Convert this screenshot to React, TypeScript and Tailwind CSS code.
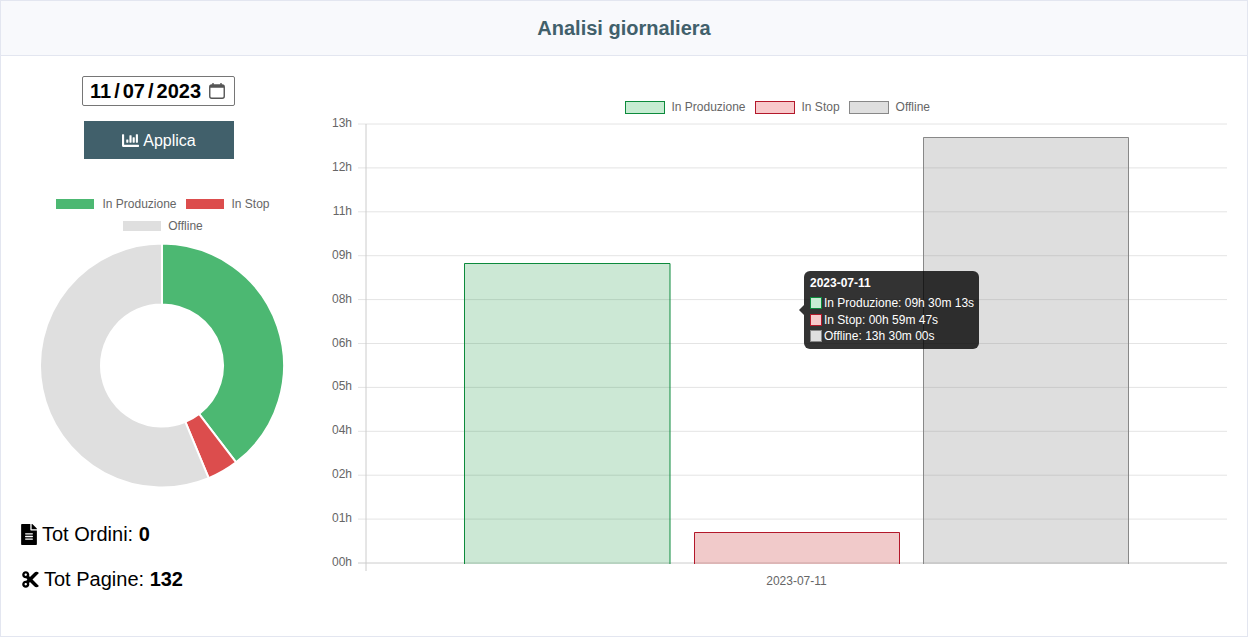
import React from 'react';
import { FaChartBar, FaCut, FaFileAlt } from 'react-icons/fa';

const ticks = ['13h', '12h', '11h', '09h', '08h', '06h', '05h', '04h', '02h', '01h', '00h'];

const polar = (r: number, deg: number) => {
  const a = (deg * Math.PI) / 180;
  return [143 + r * Math.sin(a), 127.5 + r * Math.cos(a) * -1];
};

const slice = (from: number, to: number) => {
  const [x1, y1] = polar(122, from);
  const [x2, y2] = polar(122, to);
  const [x3, y3] = polar(61, to);
  const [x4, y4] = polar(61, from);
  const large = to - from > 180 ? 1 : 0;
  return `M${x1} ${y1}A122 122 0 ${large} 1 ${x2} ${y2}L${x3} ${y3}A61 61 0 ${large} 0 ${x4} ${y4}Z`;
};

const Doughnut: React.FC = () => (
  <svg width="286" height="254" viewBox="0 0 286 254" className="block">
    <path d={slice(0, 142.6)} fill="#4cb872" stroke="#fff" strokeWidth="2" />
    <path d={slice(142.6, 157.5)} fill="#dc4d4d" stroke="#fff" strokeWidth="2" />
    <path d={slice(157.5, 360)} fill="#dfdfdf" stroke="#fff" strokeWidth="2" />
  </svg>
);

const BarChart: React.FC = () => (
  <svg width="924" height="485" viewBox="323 115 924 485" className="block" fontFamily='"Liberation Sans", Arial, sans-serif'>
    {ticks.map((t, i) => {
      const y = 124 + i * 43.9;
      return (
        <g key={t}>
          <line x1="358" x2="1227" y1={y} y2={y} stroke={i === 10 ? '#cccccc' : '#e4e4e4'} />
          <text x="352" y={y + 3} textAnchor="end" fontSize="12" fill="#666">{t}</text>
        </g>
      );
    })}
    <line x1="366" x2="366" y1="124" y2="571" stroke="#cccccc" />
    <rect x="464" y="263" width="206" height="301" fill="#008a2e" fillOpacity="0.2" />
    <path d="M464.5 564V263.5H670V564" fill="none" stroke="#0c8a3c" />
    <rect x="694" y="532" width="206" height="32" fill="#c92a2a" fillOpacity="0.25" />
    <path d="M694.5 564V532.5H899.5V564" fill="none" stroke="#b3182a" />
    <rect x="923" y="137" width="206" height="427" fill="#8a8a8a" fillOpacity="0.28" />
    <path d="M923.5 564V137.5H1128.5V564" fill="none" stroke="#888" />
    <text x="796.5" y="585" textAnchor="middle" fontSize="12" fill="#666">2023-07-11</text>
  </svg>
);

const LegendItem: React.FC<{ box: string; label: string; gap: string; text?: string }> = ({ box, label, gap, text }) => (
  <div className={`flex items-center ${gap}`}>
    <span className={`block ${box}`}></span>
    <span className={`text-[12px] leading-[14px] text-[#666] ${text ?? ''}`}>{label}</span>
  </div>
);

const TooltipRow: React.FC<{ box: string; label: string }> = ({ box, label }) => (
  <div className="flex items-center h-[16.5px] gap-[2px] whitespace-nowrap">
    <span className={`block shrink-0 w-[12px] h-[12px] border ${box}`}></span>
    <span>{label}</span>
  </div>
);

export default function App() {
  return (
    <div className="w-[1248px] h-[637px] bg-white border border-[#e3e6f0] flex flex-col font-['Liberation_Sans',Arial,sans-serif] overflow-hidden">
      <header className="h-[55px] shrink-0 bg-[#f8f9fc] border-b border-[#e3e6f0] flex items-center justify-center">
        <h1 className="text-[20px] font-bold text-[#41606b]">Analisi giornaliera</h1>
      </header>

      <main className="flex flex-1 min-h-0">
        <section className="w-[322px] shrink-0 flex flex-col items-center pt-[20px]">
          <div className="w-[153px] mr-[7px]">
            <div className="h-[30px] rounded-[2px] border border-[#767676] flex items-center pl-[7px] text-[20px] font-bold text-black">
              <span>11</span>
              <span className="mx-[3px]">/</span>
              <span>07</span>
              <span className="mx-[3px]">/</span>
              <span>2023</span>
              <svg width="18" height="18" viewBox="0 0 18 18" className="ml-[7px]" fill="none">
                <rect x="1.75" y="3" width="14.5" height="13.25" rx="2" stroke="#555" strokeWidth="1.4" />
                <rect x="2" y="3" width="14" height="2.75" fill="#555" />
                <path d="M5 1v3M13 1v3" stroke="#555" strokeWidth="1.4" />
              </svg>
            </div>
            <button className="mt-[15px] ml-[2px] w-[150px] h-[38px] pt-[1px] bg-[#41606b] text-white text-[16px] flex items-center justify-center gap-[4px]">
              <FaChartBar className="w-[17px] h-[17px] mb-[1px]" />
              Applica
            </button>
          </div>

          <div className="mt-[38px] w-[286px] pl-[2px] flex flex-wrap justify-center gap-x-[9px] gap-y-[8px]">
            <LegendItem gap="gap-[8px]" box="w-[38px] h-[10px] bg-[#4cb872]" label="In Produzione" />
            <LegendItem gap="gap-[8px]" box="w-[38px] h-[10px] bg-[#dc4d4d]" label="In Stop" />
            <LegendItem gap="gap-[7px]" box="w-[38px] h-[10px] bg-[#dfdfdf]" label="Offline" />
          </div>

          <div className="mt-[5px]">
            <Doughnut />
          </div>

          <div className="w-full pl-[20px] mt-[30px] text-[20px] leading-[24px] text-black">
            <p className="flex items-center gap-[5px]">
              <FaFileAlt className="w-[16px] h-[21px]" />
              <span>Tot Ordini: <b>0</b></span>
            </p>
            <p className="flex items-center gap-[4px] mt-[21px]">
              <FaCut className="w-[19px] h-[19px]" />
              <span>Tot Pagine: <b>132</b></span>
            </p>
          </div>
        </section>

        <section className="relative flex-1 min-w-0">
          <div className="pt-[44px] pr-[15px] flex justify-center gap-x-[9.5px] h-[59px]">
            <LegendItem gap="gap-[6.5px]" text="-mt-[2px]" box="w-[40px] h-[13px] bg-[#c6ecd2] border border-[#0c8a3c]" label="In Produzione" />
            <LegendItem gap="gap-[6.5px]" text="-mt-[2px]" box="w-[40px] h-[13px] bg-[#f8c9cb] border border-[#b3182a]" label="In Stop" />
            <LegendItem gap="gap-[6.5px]" text="-mt-[2px]" box="w-[40px] h-[13px] bg-[#dfdfdf] border border-[#888]" label="Offline" />
          </div>
          <BarChart />

          <div className="absolute left-[481px] top-[215px] w-[175px] h-[78px] rounded-[6px] bg-black/80 px-[6px] pt-[5px] text-[12px] leading-[14px] text-white">
            <span className="absolute left-[-5px] top-[34px] w-0 h-0 border-y-[5px] border-r-[5px] border-y-transparent border-r-black/80"></span>
            <div className="font-bold mb-[5px]">2023-07-11</div>
            <TooltipRow box="bg-[#c6ecd2] border-[#0c8a3c]" label="In Produzione: 09h 30m 13s" />
            <TooltipRow box="bg-[#f8c9cb] border-[#b3182a]" label="In Stop: 00h 59m 47s" />
            <TooltipRow box="bg-[#dfdfdf] border-[#888]" label="Offline: 13h 30m 00s" />
          </div>
        </section>
      </main>
    </div>
  );
}
